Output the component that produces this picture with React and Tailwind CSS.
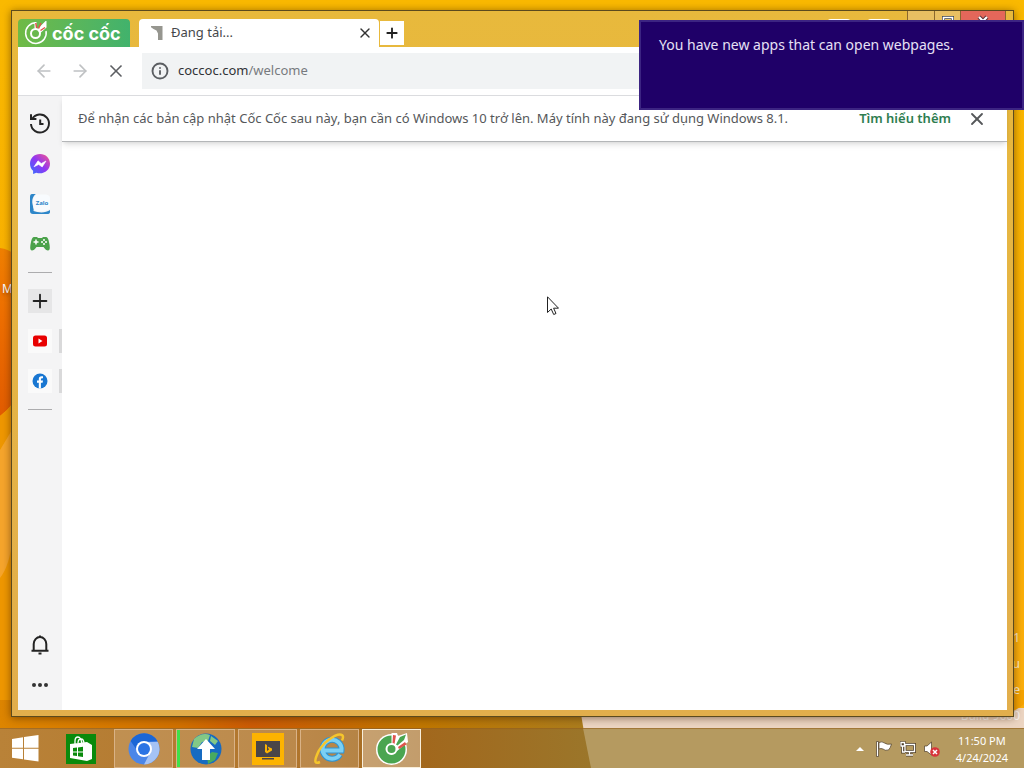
import { ArrowLeft, ArrowRight, X, Plus, Info } from "lucide-react";

const ui = "font-['Noto_Sans','Open_Sans',sans-serif]";

function Wallpaper() {
  return (
    <svg
      className="absolute inset-0 h-full w-full"
      viewBox="0 0 1024 768"
      preserveAspectRatio="none"
      aria-hidden="true"
    >
      <defs>
        <linearGradient id="sky" x1="0" y1="0" x2="0" y2="1">
          <stop offset="0" stopColor="#fab900" />
          <stop offset="0.5" stopColor="#f9ae00" />
          <stop offset="1" stopColor="#fbae10" />
        </linearGradient>
        <linearGradient id="leaf" x1="0" y1="0" x2="0" y2="1">
          <stop offset="0" stopColor="#f08000" />
          <stop offset="0.4" stopColor="#ee6f00" />
          <stop offset="1" stopColor="#e25c00" />
        </linearGradient>
        <linearGradient id="ground" x1="0" y1="0" x2="1" y2="0">
          <stop offset="0" stopColor="#dd8500" />
          <stop offset="0.3" stopColor="#d07000" />
          <stop offset="0.42" stopColor="#cb5a05" />
          <stop offset="0.7" stopColor="#bf7600" />
          <stop offset="1" stopColor="#a97d20" />
        </linearGradient>
        <linearGradient id="bar" x1="0" y1="0" x2="1" y2="0">
          <stop offset="0" stopColor="#b98238" />
          <stop offset="0.5" stopColor="#b0752c" />
          <stop offset="0.72" stopColor="#a2681d" />
          <stop offset="1" stopColor="#9b762a" />
        </linearGradient>
      </defs>
      <rect width="1024" height="768" fill="url(#sky)" />
      <path d="M0 248Q8 249 14 254V402Q8 410 0 416Z" fill="url(#leaf)" />
      <path d="M0 416Q8 410 14 402V768H0Z" fill="#ef9700" />
      <path d="M0 450L12 430V540Q10 565 0 578Z" fill="#f6a52c" />
      <path d="M0 700H600V768H0Z" fill="url(#ground)" />
      <path d="M580 708H1024V768H590Z" fill="#ecd5c2" />
      <path d="M1000 690H1024V704Q1016 712 1000 714Z" fill="#f5a300" />
      <path d="M0 728H592V768H0Z" fill="url(#bar)" />
      <path d="M583 728H1024V768H591Z" fill="#b59a60" />
    </svg>
  );
}

function DesktopLabels() {
  return (
    <div className="absolute inset-0 text-xs text-white" aria-hidden="true">
      <span className="absolute top-[281px] left-0.5 text-shadow-lg">M</span>
      <div className="absolute right-1 bottom-[39px] text-right leading-[26px] text-white/80">
        <div>1</div>
        <div>u</div>
        <div>e</div>
        <div>Build 9600</div>
      </div>
    </div>
  );
}

function CocCocMark({ className }) {
  return (
    <svg className={className} viewBox="0 0 24 24" fill="none" aria-hidden="true">
      <path d="M12 1.8A10.300 10.300 0 1 0 22 10" stroke="#fff" strokeWidth="1.500" />
      <circle cx="11.500" cy="12.500" r="4.500" stroke="#fff" strokeWidth="2" />
      <path d="M11.500 7.500V1M14.500 8.500L21.500 1.500V6L16 11Z" stroke="#fff" strokeWidth="2" fill="#fff" />
      <path d="M12.600 7L11.800 2M14.500 7.500L17 2M16.500 9.500L21 6.500" stroke="#e0524a" strokeWidth="1.500" />
    </svg>
  );
}

function TabStrip() {
  return (
    <div className="flex h-9 shrink-0 items-end pr-px">
      <button
        aria-label="Cốc Cốc"
        className="flex h-7 w-28 shrink-0 items-center gap-1 rounded-t-sm bg-linear-to-r from-[#6fba45] to-[#41b26c] pl-1.5 text-white"
      >
        <CocCocMark className="h-6 w-6" />
        <span className="pt-0.5 font-['Inter',sans-serif] text-lg leading-6 font-bold">cốc cốc</span>
      </button>
      <div className="ml-[9px] flex h-7 w-60 shrink-0 items-center rounded-t bg-white pr-1.5 pl-3">
        <svg className="h-4 w-4" viewBox="0 0 16 16" aria-hidden="true">
          <path d="M-1 1H11.500V15H7V8.500L5.500 5.500Q3 5 -1 1.500Z" fill="#96968f" />
        </svg>
        <span className="ml-1 flex-1 text-[13px] text-[#45474a]">Đang tải...</span>
        <button aria-label="Close tab" className="text-[#333]">
          <X className="h-4 w-4" strokeWidth={2} />
        </button>
      </div>
      <button
        aria-label="New tab"
        className="mb-0.5 ml-px flex h-6 w-6 items-center justify-center bg-white text-[#222]"
      >
        <Plus className="h-4 w-4" strokeWidth={2.8} />
      </button>
      <div className="mb-1 ml-auto flex self-start">
        <div className="mt-2 mr-4 h-5 w-6 rounded bg-white" />
        <div className="mt-2 mr-4 h-5 w-6 rounded bg-white" />
        <button
          aria-label="Minimize"
          className="h-5 w-[27px] border-l border-[#8a672d] bg-[#e8bf62]"
        />
        <button
          aria-label="Maximize"
          className="flex h-5 w-[26px] justify-center border-l border-[#8a672d] bg-[#e8bf62] pt-1"
        >
          <svg className="h-3 w-3" viewBox="0 0 12 12">
            <path d="M1.500 2.500H10.500V10H1.500Z" fill="none" stroke="#39424e" strokeWidth="3" />
            <path d="M1.500 2.500H10.500V10H1.500Z" fill="none" stroke="#fff" strokeWidth="1.600" />
          </svg>
        </button>
        <button
          aria-label="Close window"
          className="flex h-5 w-[46px] justify-center border-x border-[#8a672d] bg-[#e4675a] pt-1"
        >
          <svg className="h-3 w-3" viewBox="0 0 12 12">
            <path d="M2 2L10 10M10 2L2 10" stroke="#553034" strokeWidth="4" />
            <path d="M2 2L10 10M10 2L2 10" stroke="#fff" strokeWidth="2.200" />
          </svg>
        </button>
      </div>
    </div>
  );
}

function Toolbar() {
  return (
    <div className="flex h-[49px] shrink-0 items-center border-b border-[#dcdde0] bg-white pr-2 pl-4">
      <button aria-label="Back" className="w-9 text-[#bfc1c3]">
        <ArrowLeft className="h-5 w-5" strokeWidth={2} />
      </button>
      <button aria-label="Forward" className="w-9 text-[#bfc1c3]">
        <ArrowRight className="h-5 w-5" strokeWidth={2} />
      </button>
      <button aria-label="Stop" className="w-9 text-[#5c5e62]">
        <X className="h-5 w-5" strokeWidth={2} />
      </button>
      <div className="flex h-9 flex-1 items-center bg-[#f1f3f4] pl-[9px] text-[13px] text-[#777a7e]">
        <Info className="mr-[9px] h-[18px] w-[18px] text-[#5b5e62]" strokeWidth={2.5} />
        <label htmlFor="address" className="text-[#303236]">
          coccoc.com
        </label>
        <input id="address" defaultValue="/welcome" className="min-w-0 flex-1 outline-none" />
      </div>
    </div>
  );
}

function SideButton({ label, children }) {
  return (
    <button aria-label={label} className="flex h-10 w-11 items-center justify-center">
      {children}
    </button>
  );
}

function Sidebar() {
  return (
    <nav className="flex w-11 shrink-0 flex-col bg-[#f4f4f5] pt-2 pb-[5px]">
      <SideButton label="History">
        <svg className="h-6 w-6" viewBox="0 0 24 24" fill="none" stroke="#252525" strokeWidth="2">
          <path d="M4.200 7A9 9 0 1 1 3 12" />
          <path d="M3 2.300V7H8.400" />
          <path d="M12.200 7.500V12H15.500" />
        </svg>
      </SideButton>
      <SideButton label="Messenger">
        <svg className="h-5 w-5" viewBox="0 0 20 20">
          <defs>
            <linearGradient id="msg" x1="0" y1="1" x2="1" y2="0">
              <stop offset="0" stopColor="#2f72ff" />
              <stop offset="0.5" stopColor="#9036f3" />
              <stop offset="1" stopColor="#f9568a" />
            </linearGradient>
          </defs>
          <path
            d="M10 0C4.300 0 0 4.200 0 9.700C0 12.600 1.200 15.100 3.100 16.800V20L6.300 18.800C13.500 20.900 20 16.200 20 9.700C20 4.200 15.700 0 10 0Z"
            fill="url(#msg)"
          />
          <path
            d="M4 12.800L8 6.800L11.300 9.500L16 7L12.200 13L8.700 10.500Z"
            fill="#fff"
            stroke="#fff"
            strokeWidth="0.600"
          />
        </svg>
      </SideButton>
      <SideButton label="Zalo">
        <span className="relative flex h-5 w-5 items-center justify-center">
          <svg className="absolute inset-0 h-5 w-5" viewBox="0 0 20 20" aria-hidden="true">
            <path
              d="M2 0H6C3 2 1.700 6 2.500 10C3 13 4 15 3.500 17C9 19 16 19 20 16V18Q20 20 17 20H3Q0 20 0 17V3Q0 0 2 0Z"
              fill="#2d86c9"
            />
            <path d="M6 .5Q3 3 3 9Q3 14 5 17Q14 18 20 15V4Q20 1 16 .5Z" fill="#f8fbfe" />
          </svg>
          <span className="relative pb-0.5 pl-1 text-[6px] leading-none font-bold text-[#2d86c9]">
            Zalo
          </span>
        </span>
      </SideButton>
      <SideButton label="Games">
        <svg className="h-5 w-5" viewBox="0 0 20 20">
          <path
            d="M4 3H7L8 4H12L13 3H16Q18 3 19 8Q21 16.500 18 16.500Q16 16.500 13.500 13H6.500Q4 16.500 2 16.500Q-1 16.500 1 8Q2 3 4 3Z"
            fill="#4ba24b"
          />
          <path d="M6 5.500V10.500M3.500 8H8.500" stroke="#fff" strokeWidth="1.500" />
          <circle cx="14" cy="6" r="1" fill="#fff" />
          <circle cx="14" cy="10" r="1" fill="#fff" />
          <circle cx="12" cy="8" r="1" fill="#fff" />
          <circle cx="16" cy="8" r="1" fill="#fff" />
        </svg>
      </SideButton>
      <hr className="mx-2.5 my-2 border-[#acacae]" />
      <SideButton label="Add">
        <span className="flex h-6 w-6 items-center justify-center bg-[#e6e6e7] text-[#222]">
          <Plus className="h-[22px] w-[22px]" strokeWidth={2} />
        </span>
      </SideButton>
      <div className="relative">
        <SideButton label="YouTube">
          <svg className="h-6 w-6 bg-[#fafafa]" viewBox="0 0 24 24">
            <rect x="5" y="6.500" width="14" height="11" rx="2.500" fill="#e80000" />
            <path d="M10.500 9.500L14.500 12L10.500 14.500Z" fill="#fff" />
          </svg>
        </SideButton>
        <span className="absolute top-2 right-0 h-6 w-[3px] bg-[#d9d9da]" />
      </div>
      <div className="relative">
        <SideButton label="Facebook">
          <svg className="h-6 w-6 bg-[#fafafa]" viewBox="0 0 24 24">
            <circle cx="12" cy="12" r="7.500" fill="#1977d2" />
            <path
              d="M10.800 19.500V13.800H9V11.600H10.800V10Q10.800 7.300 13.500 7.300H15V9.300H14Q12.900 9.300 12.900 10.400V11.600H15L14.600 13.800H12.900V19.500Z"
              fill="#fff"
            />
          </svg>
        </SideButton>
        <span className="absolute top-2 right-0 h-6 w-[3px] bg-[#d9d9da]" />
      </div>
      <hr className="mx-2.5 mt-2 border-[#acacae]" />
      <div className="mt-auto">
        <SideButton label="Notifications">
          <svg className="h-6 w-6" viewBox="0 0 24 24" fill="none" stroke="#222" strokeWidth="2">
            <path d="M3.500 17.800H20.500M5.700 17.800V11A6.300 7 0 0 1 18.300 11V17.800" />
            <path d="M12 2.500V4.500M10.500 20.500H13.500" />
          </svg>
        </SideButton>
        <SideButton label="More">
          <svg className="h-5 w-5" viewBox="0 0 20 20" fill="#333">
            <circle cx="4" cy="10" r="2" />
            <circle cx="10" cy="10" r="2" />
            <circle cx="16" cy="10" r="2" />
          </svg>
        </SideButton>
      </div>
    </nav>
  );
}

function InfoBar() {
  return (
    <div className="flex h-[46px] items-center border-b border-[#b4b6b8] bg-white pr-5 pl-4 text-[13px] shadow-md">
      <p className="flex-1 whitespace-nowrap text-[#55575a]">
        Để nhận các bản cập nhật Cốc Cốc sau này, bạn cần có Windows 10 trở lên. Máy tính này đang
        sử dụng Windows 8.1.
      </p>
      <a href="#more" className="mr-4 font-semibold text-[#2e7d4f]">
        Tìm hiểu thêm
      </a>
      <button aria-label="Dismiss" className="text-[#55575a]">
        <X className="h-5 w-5" strokeWidth={2.2} />
      </button>
    </div>
  );
}

function Toast() {
  return (
    <div className="absolute top-5 right-0 h-[90px] w-[385px] border-2 border-[#3c2482] bg-[#1f0068] px-[18px] py-[13px] text-sm text-[#e6e0f5]">
      You have new apps that can open webpages.
    </div>
  );
}

function Cursor() {
  return (
    <svg
      className="pointer-events-none absolute top-[296px] left-[547px] h-5 w-3"
      viewBox="0 0 12 20"
      aria-hidden="true"
    >
      <path
        d="M.5 .8V16.500L4.200 13L6.700 18.500L9 17.500L6.600 12.200H11.500Z"
        fill="#fff"
        stroke="#222"
        strokeWidth="1"
      />
    </svg>
  );
}

function TaskButton({ label, active, children }) {
  return (
    <button
      aria-label={label}
      className={`flex h-[39px] w-[59px] items-center justify-center border ${
        active ? "border-[#f8eeda] bg-white/35" : "border-[#d9b286] bg-white/15"
      }`}
    >
      {children}
    </button>
  );
}

function Taskbar() {
  return (
    <footer className="relative flex h-10 shrink-0 items-center border-t border-[#94611d]/60">
      <button aria-label="Start" className="ml-3">
        <svg className="h-7 w-7" viewBox="0 0 28 28" fill="#fff">
          <path d="M0 4L11 2.300V12.800H0ZM12 2.100L26.500 0V12.800H12ZM0 13.800H11V24.300L0 22.700ZM12 13.800H26.500V26.600L12 24.500Z" />
        </svg>
      </button>
      <button aria-label="Store" className="ml-[26px]">
        <svg className="h-[30px] w-[30px]" viewBox="0 0 30 30">
          <rect width="30" height="30" fill="#0a8a0c" />
          <path d="M4 10L21 8V27L4 24ZM21 8L26 11V25L21 27Z" fill="#fff" />
          <path
            d="M9 12V7Q9 3 12 3Q15 3 16 10M12 9Q12 5 15 5Q18 5 18 10"
            fill="none"
            stroke="#fff"
            strokeWidth="1.300"
          />
          <path
            d="M7 14L11 13.500V17.500H7ZM12 13.400L17 12.800V17.500H12ZM7 18.500H11V22L7 21.600ZM12 18.500H17V23L12 22.300Z"
            fill="#0a8a0c"
          />
        </svg>
      </button>
      <div className="ml-[18px] flex gap-[3px]">
        <TaskButton label="Chromium">
          <svg className="h-8 w-8" viewBox="0 0 32 32">
            <circle cx="16" cy="16" r="15.500" fill="#4b86e8" />
            <path d="M2.600 8A15.500 15.500 0 0 1 29.400 8L16 9Q10 11 9.500 18Z" fill="#1a66d6" />
            <path d="M16 9H29.800A15.500 15.500 0 0 1 16 31.500L22 20Q24 13 16 9Z" fill="#a5c3f5" />
            <circle cx="16" cy="16" r="8" fill="#fff" />
            <circle cx="16" cy="16" r="6" fill="#2b74e4" />
          </svg>
        </TaskButton>
        <div className="relative">
          <TaskButton label="Updater">
            <svg className="h-8 w-8" viewBox="0 0 32 32">
              <circle cx="16" cy="16" r="15.500" fill="#176bc1" />
              <path d="M4 6Q12 -1 20 2L18 8L12 9L8 15L2 14Z" fill="#82c886" />
              <path d="M21 3L28 8L25 12L20 8Z" fill="#82c886" />
              <path d="M22 19L28 20L25 27L18 31L17 23Z" fill="#48aa60" />
              <path d="M16 6L25 16H20V27H12V16H7Z" fill="#fff" />
            </svg>
          </TaskButton>
          <span className="absolute inset-y-px left-px w-[3px] bg-[#3fe04a]" />
        </div>
        <TaskButton label="Video">
          <svg className="h-8 w-8" viewBox="0 0 32 32">
            <rect width="32" height="32" fill="#fdb300" />
            <path d="M4 8H28V24H4ZM10 25H22V26.500H10Z" fill="#4a4548" />
            <path d="M13 11L15 12V18L17 16.500L15.500 13.500L20 15.500V17.500L15 20.500L13 19Z" fill="#fdb300" />
          </svg>
        </TaskButton>
        <TaskButton label="Internet Explorer">
          <svg className="h-8 w-8" viewBox="0 0 32 32" fill="none">
            <path d="M26 21.500A9.500 9.500 0 1 1 27.500 17.500H9" stroke="#2f94d3" strokeWidth="6" />
            <path d="M26 21.500A9.500 9.500 0 1 1 27.500 17.500H9" stroke="#7bd0f4" strokeWidth="4" />
            <path
              d="M6 29Q-1 32 2.500 23Q6 13 15 6.500Q24 0 28 2Q30 3.500 28 7.500"
              stroke="#f5c52c"
              strokeWidth="2.500"
            />
          </svg>
        </TaskButton>
        <TaskButton label="Cốc Cốc" active>
          <svg className="h-8 w-8" viewBox="0 0 32 32" fill="none">
            <circle cx="15.500" cy="16.500" r="15.500" fill="#fff" />
            <circle cx="15.500" cy="16.500" r="9.500" stroke="#4aa550" strokeWidth="9" />
            <path d="M15.500 14V0H21L22 3L31 0L32 9L21 18Z" fill="#fff" />
            <path d="M16.500 10L17 2L20 2.500L18.500 11ZM22 14L29 9L30.500 11.500L23 16Z" fill="#df554d" />
            <path d="M20 11.500L24 4L30 1.500L28 7L21.500 12.500Z" fill="#4aa550" />
            <circle cx="15.500" cy="16" r="5" stroke="#fff" strokeWidth="2" fill="#4aa550" />
          </svg>
        </TaskButton>
      </div>
      <div className="ml-auto flex items-center gap-2">
        <button aria-label="Show hidden icons" className="mr-1">
          <svg className="h-2 w-2" viewBox="0 0 8 8" fill="#fff">
            <path d="M0 6L4 2L8 6Z" />
          </svg>
        </button>
        <button aria-label="Action center">
          <svg className="h-4 w-4" viewBox="0 0 16 16">
            <path d="M.5 .5H2.500V15.500H.5Z" fill="#fff" stroke="#4b3b26" strokeWidth="0.700" />
            <path
              d="M3 1.500Q6 0 8.500 2Q11 4 15.500 3Q14.500 7 12.500 9Q9 10 7 8Q5 7 3 8Z"
              fill="#fff"
              stroke="#4b3b26"
              strokeWidth="0.700"
            />
          </svg>
        </button>
        <button aria-label="Network">
          <svg className="h-4 w-4" viewBox="0 0 16 16" fill="none">
            <path d="M5 3.500H14.500V10.500H5ZM9.500 11V14M6 14H13M2.500 5V11H5" stroke="#4b3b26" strokeWidth="2.800" />
            <path d="M1 1.500H4.500V5H1Z" fill="#4b3b26" stroke="#4b3b26" strokeWidth="2.500" />
            <path d="M5 3.500H14.500V10.500H5ZM9.500 11V14M6 14H13M2.500 5V11H5M1 1.500H4.500V5H1Z" stroke="#fff" strokeWidth="1.300" />
          </svg>
        </button>
        <button aria-label="Volume muted">
          <svg className="h-4 w-4" viewBox="0 0 16 16">
            <path
              d="M.5 5H3L7.500 1V14L3 10.500H.5Z"
              fill="#fff"
              stroke="#4b3b26"
              strokeWidth="0.700"
            />
            <circle cx="11" cy="11" r="4.800" fill="#d8343a" />
            <path d="M9 9L13 13M13 9L9 13" stroke="#fff" strokeWidth="1.500" />
          </svg>
        </button>
      </div>
      <div className="mr-4 ml-4 text-center text-[11px] leading-[17px] text-white">
        <div>11:50 PM</div>
        <div>4/24/2024</div>
      </div>
    </footer>
  );
}

export default function App() {
  return (
    <div className={`relative flex h-screen flex-col overflow-hidden ${ui}`}>
      <Wallpaper />
      <DesktopLabels />
      <main className="relative flex min-h-0 flex-1 pt-2.5 pr-2.5 pb-[11px] pl-[11px]">
        <div className="flex min-w-0 flex-1 flex-col border border-[#5b4a1e] bg-linear-to-b from-[#e8b93c] to-[#e2ae4c] px-1.5 pb-1.5 shadow-[0_1px_8px_rgba(60,30,0,0.55)]">
          <TabStrip />
          <Toolbar />
          <div className="flex min-h-0 flex-1 bg-white">
            <Sidebar />
            <div className="min-w-0 flex-1">
              <InfoBar />
            </div>
          </div>
        </div>
      </main>
      <Taskbar />
      <Cursor />
      <Toast />
    </div>
  );
}
